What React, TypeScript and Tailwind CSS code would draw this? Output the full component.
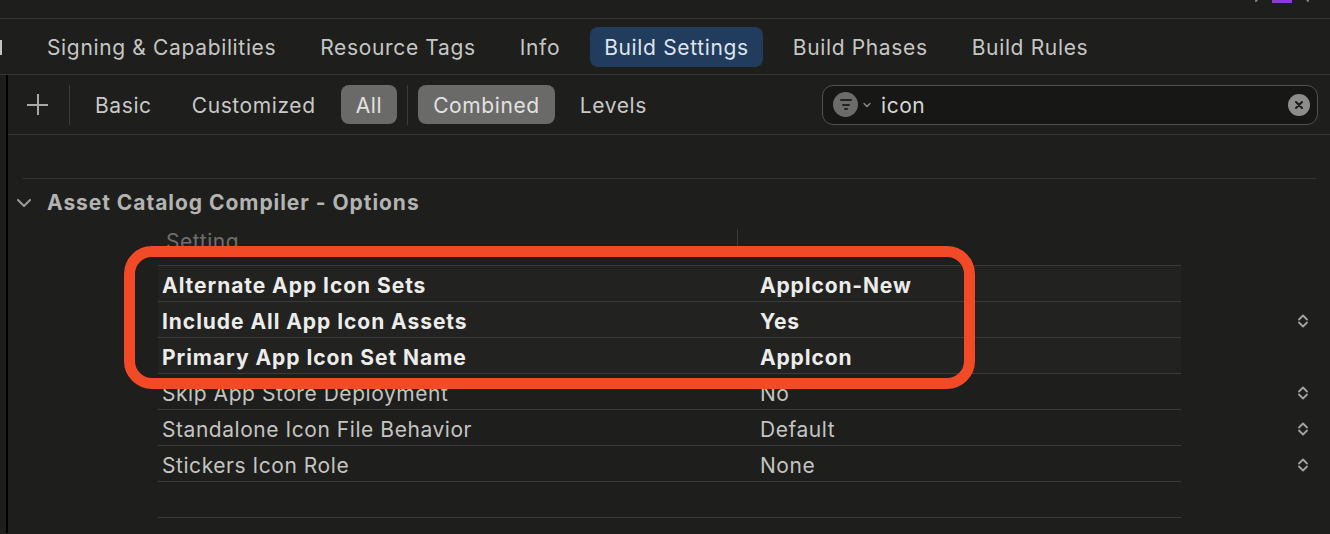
import React from "react";

const Stepper = () => (
  <svg width="12" height="18" viewBox="0 0 12 18" fill="none">
    <path d="M2 7.5 L6 3.5 L10 7.5" stroke="#a3a3a1" strokeWidth="1.8" strokeLinecap="round" strokeLinejoin="round" />
    <path d="M2 10.5 L6 14.5 L10 10.5" stroke="#a3a3a1" strokeWidth="1.8" strokeLinecap="round" strokeLinejoin="round" />
  </svg>
);

type Row = { name: string; value: string; bold?: boolean; stepper?: boolean };

const rows: Row[] = [
  { name: "Alternate App Icon Sets", value: "AppIcon-New", bold: true },
  { name: "Include All App Icon Assets", value: "Yes", bold: true, stepper: true },
  { name: "Primary App Icon Set Name", value: "AppIcon", bold: true },
  { name: "Skip App Store Deployment", value: "No", stepper: true },
  { name: "Standalone Icon File Behavior", value: "Default", stepper: true },
  { name: "Stickers Icon Role", value: "None", stepper: true },
  { name: "", value: "" },
];

const tabs = ["Signing & Capabilities", "Resource Tags", "Info", "Build Settings", "Build Phases", "Build Rules"];

export default function App() {
  return (
    <div className="relative w-[1330px] h-[534px] overflow-hidden bg-[#1e1e1c] font-['Inter',sans-serif] text-[21px] tracking-[0.55px]">
      {/* top strip */}
      <div className="h-[19px] flex justify-end items-start pr-[20px] border-b border-[#363634]">
        <div className="flex items-start gap-[10px] -mt-[6px]">
          <svg width="8" height="10" viewBox="0 0 8 10"><path d="M6 1 L2 7" stroke="#8a8a88" strokeWidth="2" strokeLinecap="round" /></svg>
          <div className="w-[20px] h-[3px] mt-[6px] bg-[#8c3bd9]" />
          <svg width="8" height="10" viewBox="0 0 8 10"><path d="M2 1 L6 7" stroke="#8a8a88" strokeWidth="2" strokeLinecap="round" /></svg>
        </div>
      </div>

      {/* tab bar */}
      <div className="h-[56px] flex items-center border-b border-[#363634] relative">
        <div className="absolute left-0 top-[21px] w-[2px] h-[15px] bg-[#c4c4c2]" />
        <div className="flex items-center gap-[16px] pl-[33px]">
          {tabs.map((t) => (
            <div
              key={t}
              className={
                t === "Build Settings"
                  ? "px-[14px] h-[40px] pt-[2px] flex items-center rounded-[8px] bg-[#213c5c] text-[#dfe5ec] tracking-[0.65px]"
                  : "px-[14px] h-[40px] pt-[2px] flex items-center text-[#c6c6c4] tracking-[0.65px]"
              }
            >
              {t}
            </div>
          ))}
        </div>
      </div>

      {/* below tabs: left black rule */}
      <div className="pl-[6px] h-[458px]">
        <div className="border-l-2 border-black h-full">
          {/* filter bar */}
          <div className="h-[60px] flex items-center border-b border-[#363634] pr-[12px]">
            <div className="ml-[19px] w-[21px] h-[21px] relative shrink-0">
              <div className="absolute left-[10px] top-0 w-[2px] h-[21px] bg-[#a9a9a7]" />
              <div className="absolute top-[10px] left-0 h-[2px] w-[21px] bg-[#a9a9a7]" />
            </div>
            <div className="ml-[21px] w-px h-[40px] bg-[#3a3a38]" />
            <div className="flex items-center gap-[10px] ml-[10px] tracking-[0.6px]">
              <div className="px-[15px] h-[39px] pt-[2px] flex items-center text-[#c8c8c6]">Basic</div>
              <div className="px-[15px] h-[39px] pt-[2px] flex items-center text-[#c8c8c6]">Customized</div>
              <div className="px-[15px] h-[39px] pt-[2px] flex items-center rounded-[8px] bg-[#6a6a69] text-[#e2e2e0]">All</div>
              <div className="w-px h-[40px] bg-[#3a3a38]" />
              <div className="px-[15px] h-[39px] pt-[2px] flex items-center rounded-[8px] bg-[#6a6a69] text-[#e2e2e0]">Combined</div>
              <div className="px-[15px] h-[39px] pt-[2px] flex items-center text-[#c8c8c6]">Levels</div>
            </div>
            {/* search */}
            <div className="ml-auto w-[496px] h-[40px] rounded-[11px] border border-[#51514f] bg-[#171715] flex items-center pl-[10px] pr-[7px]">
              <div className="w-[25px] h-[25px] rounded-full bg-[#6c6c6b] flex flex-col items-center justify-center gap-[2.5px]">
                <div className="w-[12px] h-[2px] bg-[#232321] rounded" />
                <div className="w-[8px] h-[2px] bg-[#232321] rounded" />
                <div className="w-[4px] h-[2px] bg-[#232321] rounded" />
              </div>
              <svg width="10" height="8" viewBox="0 0 10 8" className="ml-[4px]">
                <path d="M2 2.5 L5 5.5 L8 2.5" stroke="#8c8c8a" strokeWidth="1.4" fill="none" strokeLinecap="round" />
              </svg>
              <span className="ml-[9px] pt-[2px] text-[#d6d6d4]">icon</span>
              <div className="ml-auto w-[22px] h-[22px] rounded-full bg-[#8d8d8b] flex items-center justify-center">
                <svg width="10" height="10" viewBox="0 0 10 10">
                  <path d="M2 2 L8 8 M8 2 L2 8" stroke="#1c1c1a" strokeWidth="2" strokeLinecap="round" />
                </svg>
              </div>
            </div>
          </div>

          {/* body */}
          <div className="pt-[43px]">
            <div className="ml-[15px] mr-[14px] h-px bg-[#343432]" />
            <div className="h-[44px] flex items-center pt-[3px]">
              <svg width="16" height="10" viewBox="0 0 16 10" className="ml-[8px]">
                <path d="M2 2 L8 8 L14 2" stroke="#9a9a98" strokeWidth="2" fill="none" strokeLinecap="round" strokeLinejoin="round" />
              </svg>
              <span className="ml-[15px] font-bold tracking-[0.95px] text-[#b3b3b1]">Asset Catalog Compiler - Options</span>
            </div>
            <div className="ml-[150px] w-[1023px]">
              <div className="h-[43px] flex items-center border-b border-[#3a3a38]">
                <span className="ml-[8px] w-[571px] text-[#6e6e6c] mt-[-4px]">Setting</span>
                <div className="w-px h-[20px] bg-[#3a3a38] mt-[-10px]" />
              </div>
            </div>
            {rows.map((r, i) => (
              <div key={i} className="flex items-center">
                <div
                  className={
                    "ml-[150px] w-[1023px] h-[36px] flex items-center pt-[4px] border-b border-[#3a3a38] " +
                    (r.bold ? "bg-[#222220]" : "")
                  }
                >
                  <span
                    className={
                      r.bold
                        ? "ml-[4px] w-[598px] font-bold tracking-[0.95px] text-[#ececea]"
                        : "ml-[4px] w-[598px] tracking-[0.55px] text-[#c4c4c2]"
                    }
                  >
                    {r.name}
                  </span>
                  <span className={r.bold ? "font-bold tracking-[0.85px] text-[#ececea]" : "tracking-[0.55px] text-[#c4c4c2]"}>{r.value}</span>
                </div>
                {r.stepper && (
                  <div className="ml-[116px] flex items-center pt-[1px]">
                    <Stepper />
                  </div>
                )}
              </div>
            ))}
          </div>
        </div>
      </div>

      {/* red annotation */}
      <div className="absolute left-[124px] top-[246px] w-[851px] h-[143px] border-[11px] border-[#f24a27] rounded-[28px] pointer-events-none" />
    </div>
  );
}
